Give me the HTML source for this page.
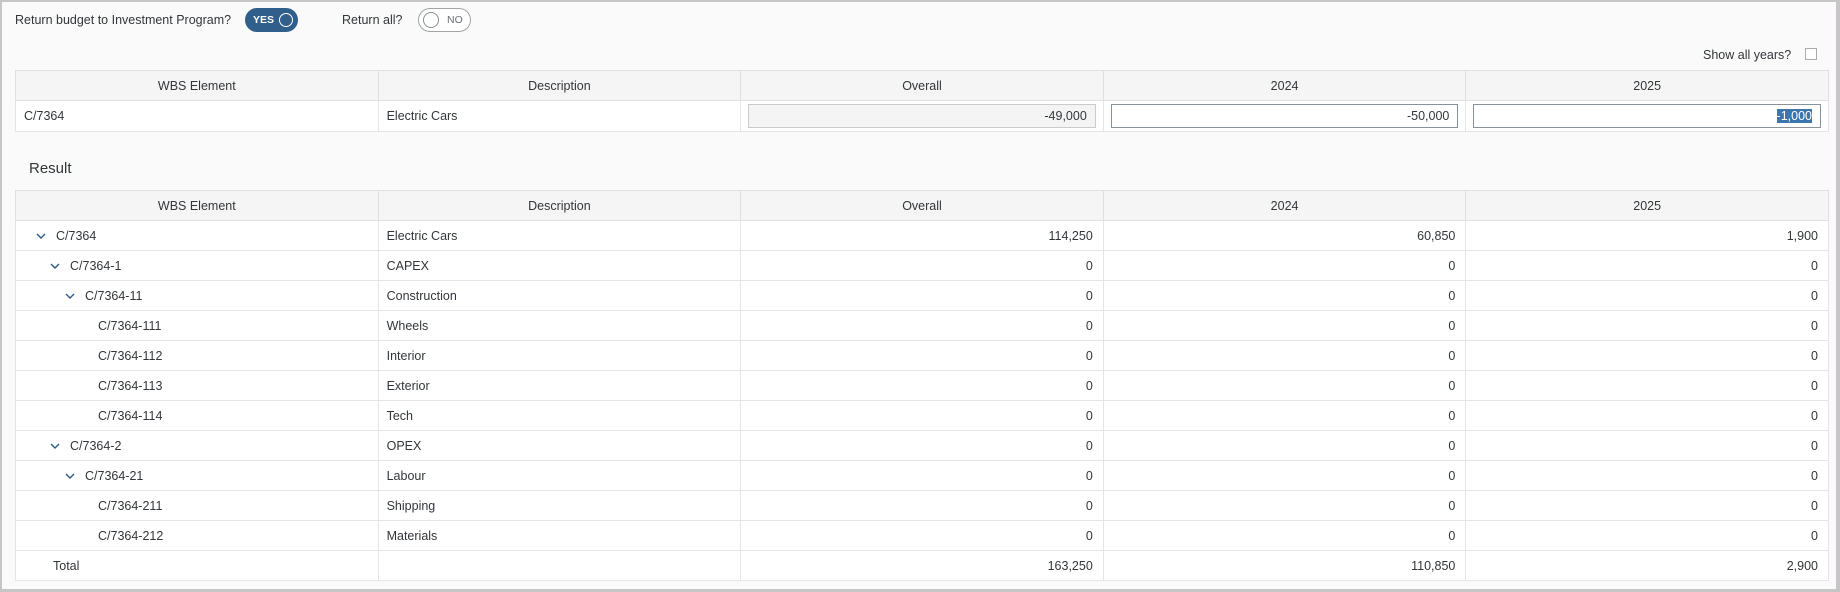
<!DOCTYPE html>
<html><head><meta charset="utf-8"><style>
*{box-sizing:border-box;margin:0;padding:0}
html,body{width:1840px;height:592px;overflow:hidden}
body{background:#fafafa;font-family:"Liberation Sans",sans-serif;font-size:12.5px;color:#32363a;position:relative}
.frame{position:absolute;left:0;top:0;width:1840px;height:592px;border:3px solid #c8c5c8;border-top-width:2px;border-left-width:2px;border-right-width:4px}
.abs{position:absolute}
.tog{position:absolute;top:8px;height:24px;border-radius:12px;font-size:10.5px;font-weight:bold}
.tog span{position:absolute}
table{position:absolute;left:15px;width:1814px;border-collapse:collapse;table-layout:fixed;background:#fff;border:1px solid #d9d9d9}
td,th{border:1px solid #e5e5e5;height:30px;padding:0 8px;font-weight:normal;white-space:nowrap;overflow:hidden}
th{background:#f5f5f5;color:#32363a;text-align:center;border-color:#e0e0e0}
td.n{text-align:right;padding-right:10px}
.inp{height:24px;border:1px solid #b5b9bd;background:#fff;text-align:right;padding:0 8px;line-height:22px}
.chev{display:inline-block;width:20px;vertical-align:middle}
</style></head><body>
<div class="frame"></div>
<div class="abs" style="left:15px;top:13px">Return budget to Investment Program?</div>
<div class="tog" style="left:245px;width:53px;background:#2f5f8a;color:#fff"><span style="left:8px;top:6px">YES</span><span style="left:34px;top:5px;width:14px;height:14px;border-radius:50%;border:1.5px solid #fff"></span></div>
<div class="abs" style="left:342px;top:13px">Return all?</div>
<div class="tog" style="left:418px;width:53px;background:#fff;border:1px solid #a0a4a8;color:#6a6d70;font-weight:normal"><span style="left:4px;top:3px;width:16px;height:16px;border-radius:50%;border:1px solid #8a8d90"></span><span style="left:28px;top:5px">NO</span></div>
<div class="abs" style="left:1703px;top:48px">Show all years?</div>
<div class="abs" style="left:1805px;top:48px;width:12px;height:12px;border:1px solid #a8abae;background:#fff"></div>

<table style="top:70px">
<tr><th>WBS Element</th><th>Description</th><th>Overall</th><th>2024</th><th>2025</th></tr>
<tr style="height:31px"><td>C/7364</td><td>Electric Cars</td>
<td style="padding:0 7px"><div class="inp" style="background:#f4f4f4;border-color:#c9cbcd">-49,000</div></td>
<td style="padding:0 7px"><div class="inp" style="border-color:#89919a">-50,000</div></td>
<td style="padding:0 7px"><div class="inp" style="border-color:#89919a"><span style="background:#3c76ad;color:#fff">-1,000</span></div></td></tr>
</table>

<div class="abs" style="left:29px;top:160px;font-size:15px">Result</div>

<table style="top:190px">
<tr><th>WBS Element</th><th>Description</th><th>Overall</th><th>2024</th><th>2025</th></tr>
<tr><td style="padding-left:20px"><svg class="chev" width="20" height="10" viewBox="0 0 20 10"><path d="M1 3l4 4 4-4" fill="none" stroke="#2b5a85" stroke-width="1.4"/></svg>C/7364</td><td>Electric Cars</td><td class="n">114,250</td><td class="n">60,850</td><td class="n">1,900</td></tr>
<tr><td style="padding-left:34px"><svg class="chev" width="20" height="10" viewBox="0 0 20 10"><path d="M1 3l4 4 4-4" fill="none" stroke="#2b5a85" stroke-width="1.4"/></svg>C/7364-1</td><td>CAPEX</td><td class="n">0</td><td class="n">0</td><td class="n">0</td></tr>
<tr><td style="padding-left:49px"><svg class="chev" width="20" height="10" viewBox="0 0 20 10"><path d="M1 3l4 4 4-4" fill="none" stroke="#2b5a85" stroke-width="1.4"/></svg>C/7364-11</td><td>Construction</td><td class="n">0</td><td class="n">0</td><td class="n">0</td></tr>
<tr><td style="padding-left:82px">C/7364-111</td><td>Wheels</td><td class="n">0</td><td class="n">0</td><td class="n">0</td></tr>
<tr><td style="padding-left:82px">C/7364-112</td><td>Interior</td><td class="n">0</td><td class="n">0</td><td class="n">0</td></tr>
<tr><td style="padding-left:82px">C/7364-113</td><td>Exterior</td><td class="n">0</td><td class="n">0</td><td class="n">0</td></tr>
<tr><td style="padding-left:82px">C/7364-114</td><td>Tech</td><td class="n">0</td><td class="n">0</td><td class="n">0</td></tr>
<tr><td style="padding-left:34px"><svg class="chev" width="20" height="10" viewBox="0 0 20 10"><path d="M1 3l4 4 4-4" fill="none" stroke="#2b5a85" stroke-width="1.4"/></svg>C/7364-2</td><td>OPEX</td><td class="n">0</td><td class="n">0</td><td class="n">0</td></tr>
<tr><td style="padding-left:49px"><svg class="chev" width="20" height="10" viewBox="0 0 20 10"><path d="M1 3l4 4 4-4" fill="none" stroke="#2b5a85" stroke-width="1.4"/></svg>C/7364-21</td><td>Labour</td><td class="n">0</td><td class="n">0</td><td class="n">0</td></tr>
<tr><td style="padding-left:82px">C/7364-211</td><td>Shipping</td><td class="n">0</td><td class="n">0</td><td class="n">0</td></tr>
<tr><td style="padding-left:82px">C/7364-212</td><td>Materials</td><td class="n">0</td><td class="n">0</td><td class="n">0</td></tr>
<tr><td style="padding-left:37px">Total</td><td></td><td class="n">163,250</td><td class="n">110,850</td><td class="n">2,900</td></tr>
</table>
</body></html>
